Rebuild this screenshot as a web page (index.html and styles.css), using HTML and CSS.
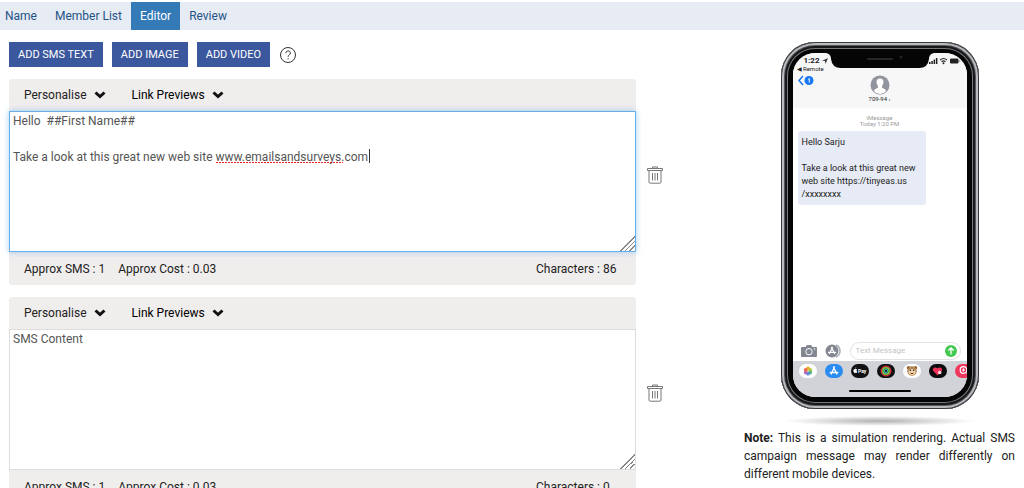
FILE: index.html
```html
<!DOCTYPE html>
<html lang="en">
<head>
	<title>SMS Campaign Editor</title>
	<meta charset="utf-8">
	<link rel="stylesheet" href="styles.css">
</head>

<body>

	<nav class="steps">
		<a href="#name">Name</a>
		<a href="#members">Member List</a>
		<a href="#editor" class="active">Editor</a>
		<a href="#review">Review</a>
	</nav>

	<main class="container">

		<div class="editor">
			<div class="toolbar">
				<button type="button" class="add-button">ADD SMS TEXT</button>
				<button type="button" class="add-button">ADD IMAGE</button>
				<button type="button" class="add-button">ADD VIDEO</button>
				<button type="button" class="icon-button" aria-label="Help">
					<svg width="18" height="18" viewBox="0 0 18 18" fill="none" stroke="#333">
						<circle cx="9" cy="9" r="7.5"/>
						<path d="M6.8 7.2c0-3 4.6-3 4.6-.2 0 1.8-2.3 1.9-2.3 3.8M9.1 12.2v1.2"/>
					</svg>
				</button>
			</div>

			<section class="block">
				<div class="card">
					<div class="card-head">
						<button type="button" class="menu-button">Personalise
							<svg width="12" height="8" viewBox="0 0 12 8"><path d="M1.5 1.5 6 5.5l4.5-4"/></svg>
						</button>
						<button type="button" class="menu-button link-menu">Link Previews
							<svg width="12" height="8" viewBox="0 0 12 8"><path d="M1.5 1.5 6 5.5l4.5-4"/></svg>
						</button>
					</div>
					<div class="text-wrap">
						<textarea class="focused" aria-label="SMS text" spellcheck="false">Hello  ##First Name##

Take a look at this great new web site www.emailsandsurveys.com</textarea>
						<span class="misspelt"></span>
						<span class="caret"></span>
					</div>
					<div class="card-foot">
						<span>Approx SMS : 1</span>
						<span>Approx Cost : 0.03</span>
						<span class="count">Characters : 86</span>
					</div>
				</div>
				<button type="button" class="icon-button delete" aria-label="Delete">
					<svg width="16" height="18" viewBox="0 0 16 18" fill="none" stroke="#777">
						<path d="M5.5 2.5V1h5v1.5M.5 2.500h15v2H.5zM2 4.500V16q0 1.200 1.200 1.200h9.600q1.200 0 1.200-1.200V4.500"/>
						<path d="M5.500 7v7.500M8 7v7.500M10.500 7v7.500"/>
					</svg>
				</button>
			</section>

			<section class="block">
				<div class="card">
					<div class="card-head">
						<button type="button" class="menu-button">Personalise
							<svg width="12" height="8" viewBox="0 0 12 8"><path d="M1.5 1.5 6 5.5l4.5-4"/></svg>
						</button>
						<button type="button" class="menu-button link-menu">Link Previews
							<svg width="12" height="8" viewBox="0 0 12 8"><path d="M1.5 1.5 6 5.5l4.5-4"/></svg>
						</button>
					</div>
					<div class="text-wrap">
						<textarea aria-label="SMS text" placeholder="SMS Content"></textarea>
					</div>
					<div class="card-foot">
						<span>Approx SMS : 1</span>
						<span>Approx Cost : 0.03</span>
						<span class="count">Characters : 0</span>
					</div>
				</div>
				<button type="button" class="icon-button delete" aria-label="Delete">
					<svg width="16" height="18" viewBox="0 0 16 18" fill="none" stroke="#777">
						<path d="M5.5 2.5V1h5v1.5M.5 2.500h15v2H.5zM2 4.500V16q0 1.200 1.200 1.200h9.600q1.200 0 1.200-1.200V4.500"/>
						<path d="M5.500 7v7.500M8 7v7.500M10.500 7v7.500"/>
					</svg>
				</button>
			</section>
		</div>

		<aside class="preview">
			<div class="phone">
				<div class="screen">
					<div class="notch">
						<svg width="110" height="16" viewBox="0 0 110 16">
							<path d="M0 0h110q-5 0-6 5v1q-1 9-10 9H16q-9 0-10-9V5Q5 0 0 0z" fill="#050506"/>
							<path d="M43 6h24" stroke="#26272b" stroke-width="2" stroke-linecap="round"/>
							<circle cx="76" cy="4" r="1.5" fill="#20242c"/>
						</svg>
					</div>

					<div class="screen-head">
						<div class="status">
							<span class="time">1:22
								<svg width="6" height="6" viewBox="0 0 6 6"><path d="M0 3 6 0 3.5 6 3 3z" fill="#333"/></svg>
							</span>
							<svg width="32" height="8" viewBox="0 0 32 8" fill="#222">
								<path d="M0 5h1.500v2H0zM2.300 4h1.500v3H2.300zM4.600 2.500h1.500V7H4.600zM6.900 1h1.500v6H6.900z"/>
								<path d="M11 3q3.500-3 7 0M12.500 4.700q2-1.700 4 0" fill="none" stroke="#222" stroke-width="1.1"/>
								<circle cx="14.5" cy="6.2" r="1"/>
								<rect x="21" y="1.5" width="8.5" height="5" rx="1.2"/>
								<path d="M30.2 3h1v2h-1z" fill="#999"/>
							</svg>
						</div>
						<div class="remote">◀ Remote</div>
						<div class="contact">
							<svg width="16" height="11" viewBox="0 0 16 11">
								<path d="M5 1 1 5.500 5 10" fill="none" stroke="#1877f2" stroke-width="1.5"/>
								<circle cx="11" cy="5.5" r="4.5" fill="#1877f2"/>
								<path d="M10.300 4.300l1-.8v4" fill="none" stroke="#fff"/>
							</svg>
							<svg width="20" height="20" viewBox="0 0 20 20">
								<circle cx="10" cy="10" r="9.5" fill="#92949e"/>
								<path d="M10 3.500c-2.500 0-3.700 1.700-3.500 4 .1 1.600.8 2.700 1.500 3.500v1.500c-1 1.200-3.500 1.300-4.200 3.500q2.500 3 6.200 3t6.200-3c-.7-2.200-3.200-2.300-4.200-3.500V11c.7-.8 1.400-1.900 1.500-3.500.2-2.300-1-4-3.500-4z" fill="#fff"/>
							</svg>
						</div>
						<div class="number">709-94 ›</div>
					</div>

					<div class="conversation">
						<div class="stamp">iMessage<br>Today 1:20 PM</div>
						<div class="bubble">Hello Sarju<br><br>Take a look at this great new web site https://tinyeas.us<br>/xxxxxxxx</div>
					</div>

					<div class="compose">
						<svg width="16" height="12" viewBox="0 0 16 12">
							<path d="M1 2h3.500L6 0h4l1.500 2H15q1 0 1 1v8q0 1-1 1H1q-1 0-1-1V3q0-1 1-1z" fill="#838791"/>
							<circle cx="8" cy="6.7" r="3.2" fill="none" stroke="#fff"/>
							<circle cx="13.5" cy="4" r=".7" fill="#fff"/>
						</svg>
						<svg width="17" height="14" viewBox="0 0 17 14">
							<path d="M11 1a6.500 6.500 0 0 1 0 12" fill="none" stroke="#a9acb3" stroke-width="1.5"/>
							<circle cx="7" cy="7" r="6.5" fill="#838791"/>
							<path d="M7.700 3 4.200 10M6.300 3l3.500 7M3 8.300h8" stroke="#fff" stroke-width="1.2"/>
						</svg>
						<div class="compose-field">
							<input type="text" aria-label="Text message" placeholder="Text Message">
							<button type="button" class="icon-button" aria-label="Send">
								<svg width="12" height="12" viewBox="0 0 12 12">
									<circle cx="6" cy="6" r="6" fill="#43c951"/>
									<path d="M6 9.500V3M3.300 5.500 6 2.800l2.700 2.700" fill="none" stroke="#fff" stroke-width="1.3"/>
								</svg>
							</button>
						</div>
					</div>

					<div class="dock">
						<div class="apps">
							<!-- photos -->
							<svg width="18" height="14" viewBox="0 0 18 14">
								<rect width="18" height="14" rx="7" fill="#fff"/>
								<circle cx="9" cy="4.5" r="1.9" fill="#f5a623"/>
								<circle cx="11.3" cy="5.9" r="1.9" fill="#b8cc3a"/>
								<circle cx="11.1" cy="8.5" r="1.9" fill="#4fb581"/>
								<circle cx="9" cy="9.7" r="1.9" fill="#5f8fd8"/>
								<circle cx="6.8" cy="8.5" r="1.9" fill="#a66cc4"/>
								<circle cx="6.7" cy="5.9" r="1.9" fill="#ec6a55"/>
							</svg>
							<!-- app store -->
							<svg width="18" height="14" viewBox="0 0 18 14">
								<rect width="18" height="14" rx="7" fill="#2a8cf0"/>
								<path d="M9.700 2.500 6 10.500M8.300 2.500l3.700 8M4.700 8.500h8.600" stroke="#fff" stroke-width="1.3"/>
							</svg>
							<!-- pay -->
							<svg width="18" height="14" viewBox="0 0 18 14">
								<rect width="18" height="14" rx="7" fill="#111114"/>
								<path d="M4.300 5.200c1-.5 1.700 0 1.800.5-.9.700-.7 1.600.2 2-.4 1.200-1 1.500-2 1.100-1 .4-1.800-.4-1.900-1.700-.1-1.400.9-2.300 1.900-1.900zM4.200 4.700q0-1.200 1.100-1.500 0 1.200-1.100 1.500" fill="#fff"/>
								<text x="7" y="9" class="pay-text">Pay</text>
							</svg>
							<!-- activity -->
							<svg width="18" height="14" viewBox="0 0 18 14" fill="none">
								<rect width="18" height="14" rx="7" fill="#101012"/>
								<circle cx="9" cy="7" r="4.8" stroke="#d6323e" stroke-width="1.3"/>
								<circle cx="9" cy="7" r="3.2" stroke="#7ccc45" stroke-width="1.5"/>
								<circle cx="9" cy="7" r="1.6" stroke="#35aab0" stroke-width="1.2"/>
							</svg>
							<!-- animoji -->
							<svg width="18" height="14" viewBox="0 0 18 14">
								<rect width="18" height="14" rx="7" fill="#fff"/>
								<circle cx="5.5" cy="3.8" r="1.7" fill="#8b5b37"/>
								<circle cx="12.5" cy="3.8" r="1.7" fill="#8b5b37"/>
								<circle cx="9" cy="7" r="4.8" fill="#b58654"/>
								<ellipse cx="9" cy="8" rx="3.5" ry="3" fill="#f0d5ae"/>
								<circle cx="7.4" cy="6.3" r=".8" fill="#222"/>
								<circle cx="10.6" cy="6.3" r=".8" fill="#222"/>
								<path d="M7.500 9q1.500 1.500 3 0" stroke="#6b3b22" fill="none"/>
							</svg>
							<!-- digital touch -->
							<svg width="18" height="14" viewBox="0 0 18 14">
								<rect width="18" height="14" rx="7" fill="#0c0c0e"/>
								<path d="M8.500 11.500 4.300 7C2.700 4.500 6 2 8.500 4.500 11 2 14.300 4.500 12.700 7z" fill="#f0305a"/>
								<circle cx="10.7" cy="8.5" r="1.8" fill="#fbd5dc"/>
							</svg>
							<!-- image search -->
							<svg width="18" height="14" viewBox="0 0 18 14" fill="none">
								<rect width="18" height="14" rx="7" fill="#f0385f"/>
								<circle cx="8.5" cy="6" r="3.3" stroke="#fff" stroke-width="1.2"/>
								<path d="m11 8.500 3 3M7 6h3M8.500 4.500v3" stroke="#fff"/>
							</svg>
						</div>
						<div class="home-bar"></div>
					</div>
				</div>
			</div>
			<div class="phone-shadow"></div>

			<p class="note"><strong>Note:</strong> This is a simulation rendering. Actual SMS campaign message may render differently on different mobile devices.</p>
		</aside>

	</main>

</body>
</html>
```

FILE: styles.css
```css
* {
	box-sizing: border-box;
}

body {
	margin: 0;
	padding-top: 2px;
	color: #222;
	background-color: #fff;
	font-family: Roboto, sans-serif;
	font-size: 12px;
	line-height: 18px;
}

button, input, textarea {
	font: inherit;
}

button {
	padding: 0;
	border: none;
	background: none;
	cursor: pointer;
}

svg {
	display: block;
	flex: none;
}

/*Step tabs*/
.steps {
	display: flex;
	background-color: #e7ebf4;
}

.steps a {
	padding: 5px 9px;
	color: #1f5487;
	text-decoration: none;
}

.steps a:first-child {
	padding-left: 5px;
}

.steps a.active {
	color: #fff;
	background-color: #337ab7;
}

.container {
	display: grid;
	grid-template-columns: minmax(0, 1fr) 271px;
	gap: 72px;
	padding: 12px 9px 0;
}

/*Add buttons*/
.toolbar {
	display: flex;
	align-items: center;
	gap: 9px;
	margin-bottom: 12px;
}

.add-button {
	height: 25px;
	padding: 0 9px;
	color: #fff;
	background-color: #3b579d;
	font-size: 11px;
}

/*Message cards*/
.block {
	display: flex;
	align-items: center;
	gap: 11px;
	margin-bottom: 12px;
}

.card {
	flex: 1;
	background-color: #f0eded;
	border-radius: 3px;
}

.card-head {
	display: flex;
	align-items: center;
	gap: 26px;
	height: 32px;
	padding: 0 15px;
}

.menu-button {
	display: flex;
	align-items: center;
	gap: 7px;
	color: #222;
}

.menu-button path {
	fill: none;
	stroke: #111;
	stroke-width: 3px;
}

.link-menu {
	color: #000;
}

.delete {
	width: 25px;
	padding-bottom: 15px;
}

.text-wrap {
	position: relative;
}

textarea {
	display: block;
	width: 100%;
	height: 141px;
	padding: 0 3px;
	color: #555;
	background-color: #fff;
	border: 1px solid #ddd;
	outline: none;
	resize: vertical;
}

textarea::placeholder {
	color: #555;
}

textarea::-webkit-resizer {
	background: linear-gradient(135deg, transparent 48%, #888 48%, #888 54%, transparent 54%, transparent 64%, #888 64%, #888 70%, transparent 70%, transparent 80%, #888 80%, #888 86%, transparent 86%);
}

textarea.focused, textarea:focus {
	border-color: #66afe9;
	box-shadow: 0 0 6px rgba(102, 175, 233, 0.6);
}

.misspelt {
	position: absolute;
	top: 51px;
	left: 207px;
	width: 127px;
	height: 1px;
	background: repeating-linear-gradient(to right, #f02020 0, #f02020 2px, transparent 2px, transparent 3px);
}

.caret {
	position: absolute;
	top: 38px;
	left: 360px;
	height: 14px;
	border-left: 1px solid #333;
}

.card-foot {
	display: flex;
	gap: 13px;
	padding: 8px 17px 7px 15px;
}

.count {
	min-width: 83px;
	margin-left: auto;
}

/*Phone preview*/
.phone {
	width: 198px;
	margin: 0 auto;
	padding: 11px 12px 12px;
	background-color: #050506;
	border-radius: 34px;
	box-shadow: inset 0 0 0 1px #3a3b3e, inset 0 0 0 3px #b9bbbf, inset 0 0 0 4px #55575b, inset 0 0 0 6px #17181a, inset 0 0 0 7px #77797e;
}

.screen {
	position: relative;
	display: flex;
	flex-direction: column;
	height: 344px;
	overflow: hidden;
	background-color: #fff;
	border-radius: 22px;
}

.notch {
	position: absolute;
	top: 0;
	left: 32px;
}

.screen-head {
	height: 55px;
	background-color: #f7f7f8;
}

.status {
	display: flex;
	justify-content: space-between;
	align-items: center;
	padding: 3px 6px 0 11px;
}

.time {
	display: flex;
	align-items: center;
	gap: 2px;
	font-size: 8px;
	line-height: 9px;
	font-weight: bold;
}

.remote {
	padding-left: 4px;
	font-size: 6px;
	line-height: 7px;
}

.contact {
	display: grid;
	grid-template-columns: 1fr 20px 1fr;
	padding: 3px 5px 0;
}

.number {
	font-size: 6px;
	line-height: 8px;
	text-align: center;
}

.conversation {
	flex: 1;
	padding: 7px 5px;
}

.stamp {
	color: #999;
	font-size: 6px;
	line-height: 6px;
	text-align: center;
}

.bubble {
	width: 128px;
	margin-top: 4px;
	padding: 5px 4px 4px;
	background-color: #e7ebf5;
	border-radius: 3px;
	font-size: 9px;
	line-height: 13px;
}

.compose {
	display: flex;
	align-items: center;
	gap: 8px;
	padding: 0 6px 1px 8px;
}

.compose-field {
	display: flex;
	align-items: center;
	flex: 1;
	min-width: 0;
	height: 18px;
	padding: 0 3px 0 5px;
	border: 1px solid #e2e2e5;
	border-radius: 9px;
}

.compose-field input {
	flex: 1;
	min-width: 0;
	padding: 0;
	border: none;
	outline: none;
	background: none;
	font-size: 8px;
	line-height: 12px;
}

.compose-field input::placeholder {
	color: #c4c4c8;
}

.dock {
	height: 36px;
	padding: 3px 0 0 6px;
	background-color: #d1d3d9;
}

.apps {
	display: flex;
	gap: 8px;
}

.pay-text {
	fill: #fff;
	font-size: 5px;
	font-weight: bold;
}

.home-bar {
	width: 62px;
	height: 2px;
	margin: 12px 0 0 50px;
	background-color: #000;
	border-radius: 1px;
}

.phone-shadow {
	height: 10px;
	margin: 7px 40px 3px;
	background: radial-gradient(closest-side, rgba(0, 0, 0, 0.3), rgba(0, 0, 0, 0));
}

.note {
	margin: 0;
	text-align: justify;
}
```
